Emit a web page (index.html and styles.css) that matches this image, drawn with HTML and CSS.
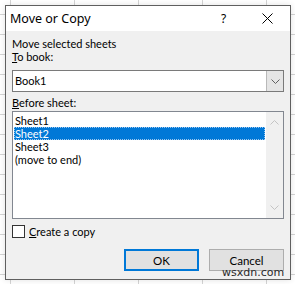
FILE: index.html
```html
<!DOCTYPE html>
<html>
<head>
    <title>Move or Copy</title>
    <meta charset="UTF-8">
    <link rel="stylesheet" href="styles.css">
</head>
<body>
    <div class="sheet">
        <div class="dialog">
            <div class="titlebar">
                <span class="title">Move or Copy</span>
                <span class="help">?</span>
                <span class="close">
                    <svg width="11" height="11" viewBox="0 0 11 11"><path d="M0.5 0.5L10.5 10.5M10.5 0.5L0.5 10.5" stroke="#000" stroke-width="1" fill="none"/></svg>
                </span>
            </div>
            <div class="content">
                <div class="label">Move selected sheets</div>
                <div class="label"><u>T</u>o book:</div>
                <div class="combo">
                    <span class="combo-value">Book1</span>
                    <span class="combo-btn">
                        <svg width="9" height="5" viewBox="0 0 9 5"><path d="M0.5 0.5L4.5 4.5L8.5 0.5" stroke="#606060" stroke-width="1" fill="none"/></svg>
                    </span>
                </div>
                <div class="label label-list"><u>B</u>efore sheet:</div>
                <div class="listbox">
                    <ul class="items">
                        <li>Sheet1</li>
                        <li class="selected">Sheet2</li>
                        <li>Sheet3</li>
                        <li>(move to end)</li>
                    </ul>
                    <div class="scrollbar">
                        <svg width="9" height="5" viewBox="0 0 9 5"><path d="M0.5 4.5L4.5 0.5L8.5 4.5" stroke="#c4c4c4" stroke-width="1" fill="none"/></svg>
                        <svg width="9" height="5" viewBox="0 0 9 5"><path d="M0.5 0.5L4.5 4.5L8.5 0.5" stroke="#c4c4c4" stroke-width="1" fill="none"/></svg>
                    </div>
                </div>
                <div class="check">
                    <span class="box"></span>
                    <span><u>C</u>reate a copy</span>
                </div>
                <div class="buttons">
                    <button class="default">OK</button>
                    <button>Cancel</button>
                </div>
            </div>
        </div>
        <div class="watermark">wsxdn.com</div>
    </div>
</body>
</html>
```

FILE: styles.css
```css
:root {
    --dialog-bg: #f0f0f0;
    --border-dark: #5f5f5f;
    --field-border: #7a7a7a;
    --accent: #0078d7;
    --ui-font: Lato, 'Noto Sans', sans-serif;
}

html, body {
    margin: 0;
    padding: 0;
}

body {
    width: 295px;
    height: 284px;
    overflow: hidden;
    font-family: var(--ui-font);
    font-size: 11px;
    color: #000;
    background-color: #fff;
    background-image:
        linear-gradient(to right, #d4d4d4 1px, transparent 1px),
        linear-gradient(to bottom, #d4d4d4 1px, transparent 1px);
    background-size: 64px 20px, 64px 20px;
    background-position: 10px 0, 0 14px;
}

.sheet {
    position: relative;
    padding: 5px 0 0 5px;
}

.dialog {
    width: 286px;
    height: 275px;
    box-sizing: border-box;
    border: 1px solid var(--border-dark);
    background-color: var(--dialog-bg);
    display: flex;
    flex-direction: column;
    box-shadow: 0 0 6px rgba(0, 0, 0, 0.12);
}

.titlebar {
    height: 25px;
    background-color: #fff;
    display: flex;
    align-items: center;
    padding-left: 4px;
}

.title {
    flex: 1;
    font-family: 'Noto Sans', sans-serif;
    font-size: 12.5px;
}

.help {
    width: 10px;
    margin-right: 31px;
    font-family: 'Noto Sans', sans-serif;
    font-size: 12px;
}

.close {
    display: flex;
    margin-right: 17px;
}

.content {
    flex: 1;
    padding: 6px 6px 0 6px;
    display: flex;
    flex-direction: column;
}

.label {
    line-height: 13px;
    height: 13px;
}

.label-list {
    margin-top: 4px;
}

.combo {
    margin-top: 7px;
    height: 22px;
    box-sizing: border-box;
    border: 1px solid var(--field-border);
    background-color: #fff;
    display: flex;
    align-items: stretch;
}

.combo-value {
    flex: 1;
    line-height: 20px;
    padding-left: 2px;
}

.combo-btn {
    width: 16px;
    border-left: 1px solid #b9b9b9;
    background-color: #e5e5e5;
    display: flex;
    align-items: center;
    justify-content: center;
}

.listbox {
    margin-top: 2px;
    height: 108px;
    box-sizing: border-box;
    border: 1px solid #828790;
    background-color: #fff;
    display: flex;
}

.items {
    flex: 1;
    list-style: none;
    margin: 0;
    padding: 2px 1px 0 1px;
}

.items li {
    line-height: 13px;
    height: 13px;
    padding-left: 1px;
}

.items li.selected {
    background-color: var(--accent);
    color: #fff;
    outline: 1px dotted #9cc7ef;
    outline-offset: -1px;
}

.scrollbar {
    width: 17px;
    background-color: #f0f0f0;
    display: flex;
    flex-direction: column;
    align-items: center;
    justify-content: space-between;
    padding: 8px 0 8px 0;
}

.check {
    margin-top: 6px;
    height: 13px;
    display: flex;
    align-items: center;
    gap: 4px;
    line-height: 13px;
}

.box {
    width: 13px;
    height: 13px;
    box-sizing: border-box;
    border: 1px solid #333;
    background-color: #fff;
}

.buttons {
    margin-top: 11px;
    display: flex;
    justify-content: flex-end;
    gap: 10px;
}

button {
    width: 75px;
    height: 22px;
    box-sizing: border-box;
    border: 1px solid #adadad;
    background-color: #e1e1e1;
    font-family: var(--ui-font);
    font-size: 11.5px;
    color: #000;
    padding: 0;
}

button.default {
    border: 2px solid var(--accent);
}

.watermark {
    position: absolute;
    left: 222px;
    top: 266px;
    font-family: 'DejaVu Sans', sans-serif;
    font-size: 11px;
    color: #2a2a2a;
}
```
